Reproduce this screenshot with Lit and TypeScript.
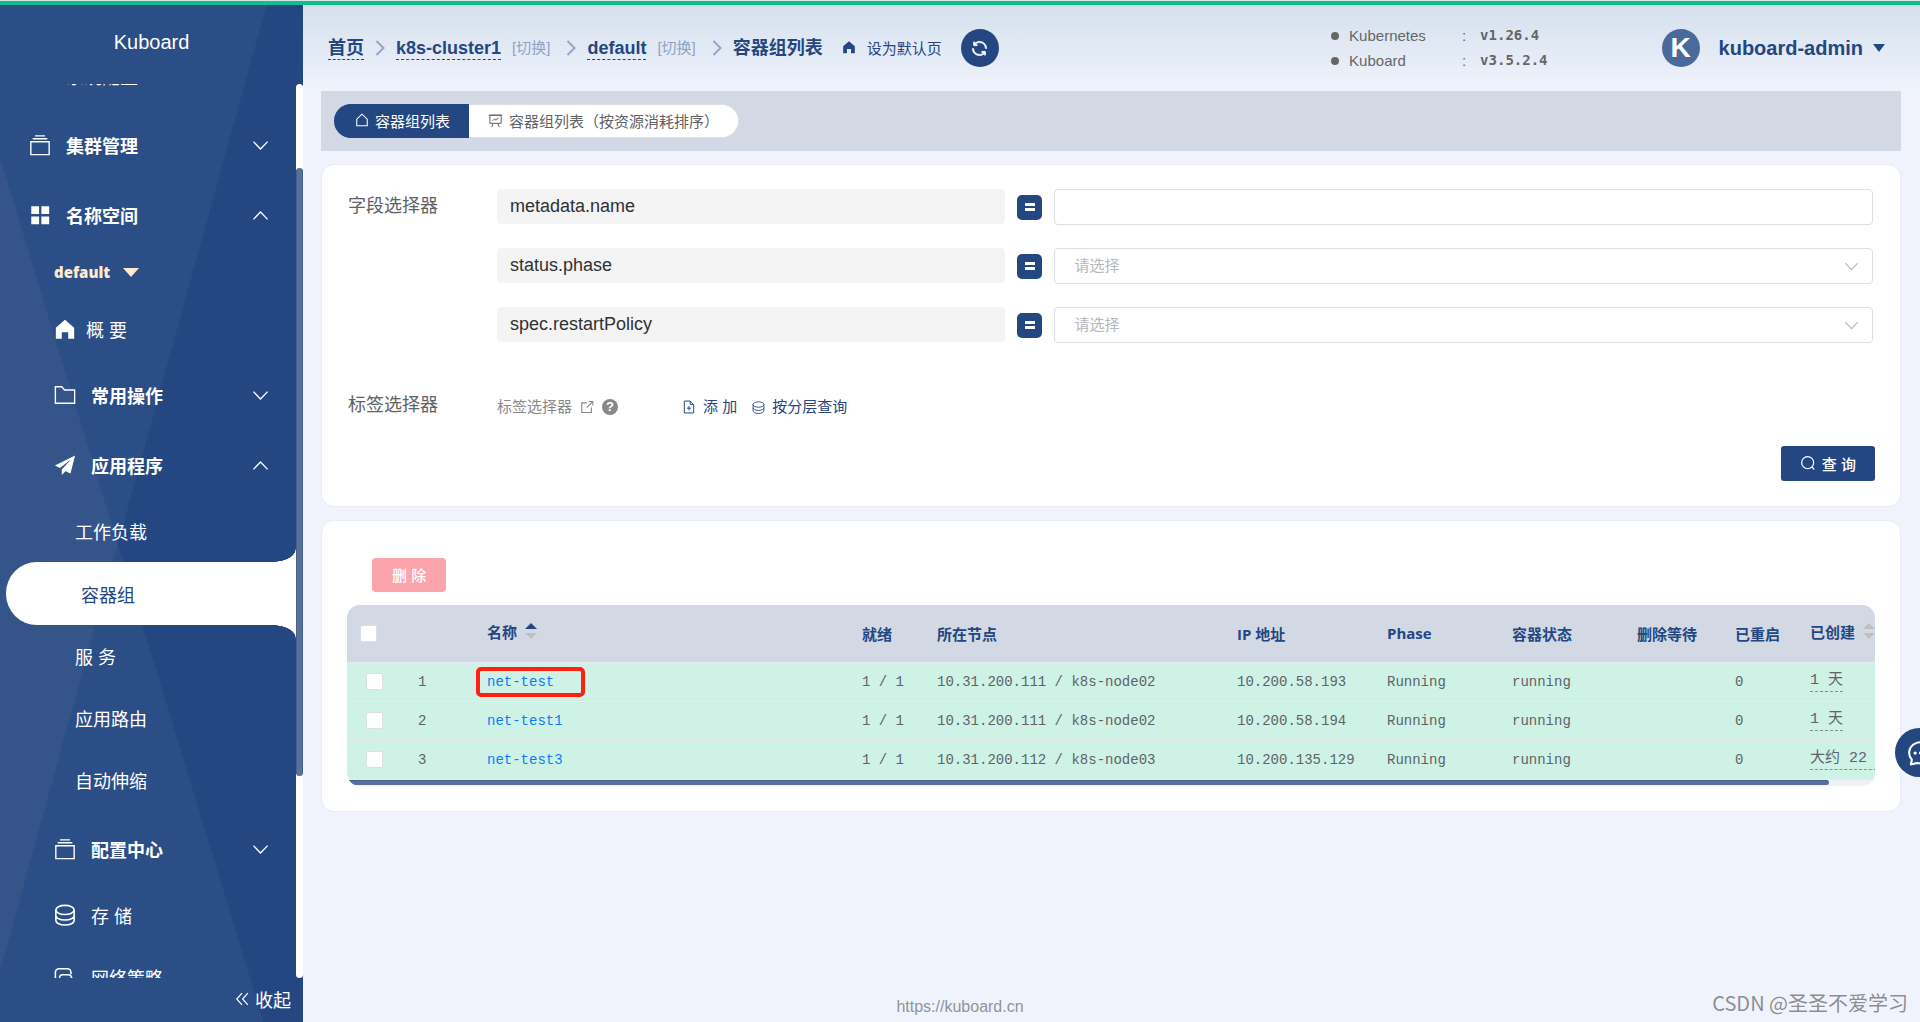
import { LitElement, html, css, svg, nothing } from "lit";
import { customElement, property } from "lit/decorators.js";
import { classMap } from "lit/directives/class-map.js";

const ICONS: Record<string, unknown> = {
  stack: svg`<path d="M2 8.500h20v14H2zM4 5.200h16M6.500 2h11" fill="none" stroke="currentColor" stroke-width="1.500"/>`,
  grid: svg`<path d="M2.500 2.500h8.500v8.500H2.500zM13.500 2.500H22v8.500h-8.500zM2.500 13.500h8.500V22H2.500zM13.500 13.500H22V22h-8.500z" fill="currentColor"/>`,
  home: svg`<path d="M12 2L22 10.500V22.500h-6.500v-7h-7v7H2V10.500z" fill="currentColor"/>`,
  folder: svg`<path d="M1.500 3h7l3 3.500h11V21h-21z" fill="none" stroke="currentColor" stroke-width="1.500"/>`,
  plane: svg`<path d="M23 1.500L1 12.500l5.500 2.700L19 5.500 8.500 17v6l4-4.200 5.500 2.400z" fill="currentColor"/>`,
  coins: svg`<g fill="none" stroke="currentColor" stroke-width="1.700"><ellipse cx="12" cy="6.500" rx="10" ry="5"/><path d="M2 6.500v6c0 2.800 4.500 5 10 5s10-2.200 10-5v-6M2 12.500v5.500c0 2.800 4.500 5 10 5s10-2.200 10-5v-5.500"/></g>`,
  network: svg`<g fill="none" stroke="currentColor" stroke-width="1.700"><path d="M8 17H5.500A4 4 0 0 1 1.500 13V7a4 4 0 0 1 4-4h9a4 4 0 0 1 4 4v2"/><path d="M9.500 22a3.500 3.500 0 0 1-3.500-3.500V13a3.500 3.500 0 0 1 3.500-3.500h6A3.500 3.500 0 0 1 19 13l4.500 2.500"/></g>`,
  down: svg`<path d="M2 6.500L12 17 22 6.500" fill="none" stroke="currentColor" stroke-width="1.800"/>`,
  up: svg`<path d="M2 17.500L12 7 22 17.500" fill="none" stroke="currentColor" stroke-width="1.800"/>`,
  left2: svg`<path d="M12 2L3 12l9 10M22 2l-9 10 9 10" fill="none" stroke="currentColor" stroke-width="2"/>`,
  refresh: svg`<path transform="scale(0.0234375)" fill="currentColor" stroke="currentColor" stroke-width="36" d="M771.776 794.880A384 384 0 0 1 128 512h64a320 320 0 0 0 555.712 216.448H654.720a32 32 0 1 1 0-64h149.056a32 32 0 0 1 32 32v148.928a32 32 0 1 1-64 0v-50.560zM276.288 295.616h92.992a32 32 0 0 1 0 64H220.160a32 32 0 0 1-32-32V178.560a32 32 0 0 1 64 0v50.560A384 384 0 0 1 896.128 512h-64a320 320 0 0 0-555.776-216.384z"/>`,
  house: svg`<path d="M3 22V10.500L12 2l9 8.500V22z" fill="none" stroke="currentColor" stroke-width="1.800"/>`,
  board: svg`<path d="M1 3.500h22M3 3.500h18v13H3zM8 17l-2 5.500M16 17l2 5.500M7.500 12.500l3-3 2.500 2 3.500-4" fill="none" stroke="currentColor" stroke-width="1.600"/>`,
  external: svg`<path d="M12 5H3v16.500h16.500V13M15 2.500h7v7M22 2.500L11.500 13" fill="none" stroke="currentColor" stroke-width="1.900"/>`,
  addFile: svg`<path d="M4 1.800h10l6 6v14.400H4zM14 1.800v6h6M12 10.500v7M8.500 14h7" fill="none" stroke="currentColor" stroke-width="1.700"/>`,
  search: svg`<path d="M11.500 2.500a9 9 0 1 0 0 18 9 9 0 1 0 0-18zM18 18l3.500 4" fill="none" stroke="currentColor" stroke-width="1.800"/>`,
  chat: svg`<path d="M4.500 18.200A10.300 9.700 0 1 1 9.500 21.200L3.500 22.500z" fill="none" stroke="currentColor" stroke-width="1.900" stroke-linejoin="round"/><g fill="currentColor"><circle cx="7.500" cy="12" r="1.500"/><circle cx="12.500" cy="12" r="1.500"/><circle cx="17.500" cy="12" r="1.500"/></g>`,
};

const icon = (name: string, size: number, cls = "") =>
  html`<svg class=${"icon " + cls} width=${size} height=${size} viewBox="0 0 24 24" aria-hidden="true">${ICONS[name]}</svg>`;

const base = css`
  * { box-sizing: border-box; }
  .icon { display: block; flex: none; }
  a { color: inherit; text-decoration: none; }
  button { font: inherit; color: inherit; border: 0; background: none; padding: 0; cursor: pointer; }
`;

@customElement("kb-sidebar")
export class KbSidebar extends LitElement {
  static styles = [base, css`
    :host {
      position: relative;
      display: flex;
      flex-direction: column;
      width: 303px;
      flex: none;
      height: calc(100vh - 5px);
      background: #244782;
      color: #fff;
      font-size: 18px;
      overflow: hidden;
    }
    :host::before, :host::after {
      content: "";
      position: absolute;
      inset: 0;
      background: rgba(255, 255, 255, 0.04);
      pointer-events: none;
    }
    :host::before { clip-path: polygon(0 15%, 87% 100%, 0 100%); }
    :host::after { clip-path: polygon(0 0, 88% 0, 0 95%); }
    .brand { padding: 22px 0 27px; font-size: 20px; line-height: 30px; text-align: center; }
    .body { position: relative; z-index: 1; flex: 1; min-height: 0; display: flex; }
    .menu { flex: 1; overflow: hidden; }
    ul { list-style: none; margin: 0; padding: 0; }
    .tree { margin-top: -39px; }
    .before { padding-bottom: 3px; }
    .apps { padding-bottom: 3px; }
    .item, .title { width: 100%; display: flex; align-items: center; text-align: left; position: relative; }
    .item { height: 62px; padding-left: 75px; }
    .title { height: 70px; padding: 0 27px 0 29px; font-weight: bold; }
    .title .text { flex: 1; }
    .icon.lead { margin-right: 15px; }
    .nested { padding-left: 54px; }
    .root { padding-left: 66px; }
    .close .icon.lead { margin-right: 10px; }
    .ns { display: flex; align-items: center; gap: 13px; height: 48px; padding: 0 0 4px 54px; color: #ffe8cc; }
    .ns .name { font: 800 15px "Open Sans", sans-serif; }
    .caret { border: 8px solid transparent; border-top: 9px solid #ffe8cc; border-bottom: 0; }
    .active { height: 63px; margin-left: 6px; width: calc(100% - 6px); background: #fff; color: #244782; border-radius: 31px 0 0 31px; }
    .active::before, .active::after { content: ""; position: absolute; right: 0; width: 23px; height: 13px; }
    .active::before { top: -13px; background: radial-gradient(ellipse 23px 13px at 0 0, transparent 97%, #fff 100%); }
    .active::after { bottom: -13px; background: radial-gradient(ellipse 23px 13px at 0 100%, transparent 97%, #fff 100%); }
    .track { width: 7px; background: #fff; border-radius: 4px; }
    .thumb { height: 68%; margin-top: 84px; background: #59709b; border-left: 1px solid #47618f; border-right: 1px solid #47618f; border-radius: 4px; }
    .fold { position: relative; z-index: 1; height: 44px; display: flex; justify-content: flex-end; align-items: center; gap: 6px; padding: 0 12px 2px 0; }
  `];

  private title(name: string, lead: string, open: boolean, nested = true) {
    return html`<button class=${classMap({ title: true, nested })} aria-expanded=${open}>
      ${icon(lead, 22, "lead")}<span class="text">${name}</span>${icon(open ? "up" : "down", 17)}
    </button>`;
  }

  render() {
    const apps = ["工作负载", "容器组", "服 务", "应用路由", "自动伸缩"];
    return html`
      <div class="brand">Kuboard</div>
      <div class="body">
        <nav class="menu">
          <ul class="tree">
            <li class="before"><a class="item root" href="#">系统配置</a></li>
            <li>${this.title("集群管理", "stack", false, false)}</li>
            <li>
              ${this.title("名称空间", "grid", true, false)}
              <button class="ns"><span class="name">default</span><span class="caret"></span></button>
              <ul>
                <li><a class="item nested close" href="#">${icon("home", 22, "lead")}概 要</a></li>
                <li>${this.title("常用操作", "folder", false)}</li>
                <li>
                  ${this.title("应用程序", "plane", true)}
                  <ul class="apps">
                    ${apps.map((a) => html`<li><a class=${classMap({ item: true, active: a === "容器组" })} href="#">${a}</a></li>`)}
                  </ul>
                </li>
                <li>${this.title("配置中心", "stack", false)}</li>
                <li><a class="item nested" href="#">${icon("coins", 22, "lead")}存 储</a></li>
                <li><a class="item nested" href="#">${icon("network", 22, "lead")}网络策略</a></li>
              </ul>
            </li>
          </ul>
        </nav>
        <div class="track"><div class="thumb"></div></div>
      </div>
      <button class="fold">${icon("left2", 14)}收起</button>
    `;
  }
}

@customElement("kb-header")
export class KbHeader extends LitElement {
  static styles = [base, css`
    :host {
      display: flex;
      align-items: center;
      height: 86px;
      padding: 0 35px 0 25px;
      background: linear-gradient(#d4e0ed, #f0f3fc);
      color: #244782;
      white-space: nowrap;
    }
    .crumbs { display: flex; align-items: center; gap: 11px; font-size: 18px; line-height: 22px; font-weight: bold; }
    .link { border-bottom: 1px dashed #244782; }
    .switch { margin-right: 5px; font-size: 15px; font-weight: normal; color: #8fa3c3; }
    .sep { color: #92a6c6; }
    .default { display: flex; align-items: center; gap: 11px; margin: 0 19px; padding-bottom: 2px; font-size: 15px; }
    .round { width: 38px; height: 38px; border-radius: 50%; background: #244782; color: #fff; display: grid; place-items: center; }
    .versions { margin: 0 114px 0 auto; display: grid; grid-template-columns: 18px 113px 18px auto; align-items: center; font-size: 15px; line-height: 25px; color: #666; }
    .dot { width: 8px; height: 8px; border-radius: 50%; background: #666; }
    .value { font: bold 14px/25px "DejaVu Sans Mono", monospace; }
    .user { display: flex; align-items: center; font-size: 20px; font-weight: bold; }
    .avatar { width: 38px; height: 38px; margin-right: 19px; border-radius: 50%; background: #4a6a9c; color: #fff; font-size: 28px; line-height: 38px; text-align: center; }
    .caret { margin-left: 10px; border: 6px solid transparent; border-top: 8px solid #244782; border-bottom: 0; }
  `];

  private sep() {
    return html`<svg class="icon sep" width="10" height="16" viewBox="0 0 10 16" aria-hidden="true"><path d="M1.500 1l7 7-7 7" fill="none" stroke="currentColor" stroke-width="2"/></svg>`;
  }

  render() {
    return html`
      <nav class="crumbs">
        <a class="link" href="#">首页</a>${this.sep()}
        <a class="link" href="#">k8s-cluster1</a><a class="switch" href="#">[切换]</a>${this.sep()}
        <a class="link" href="#">default</a><a class="switch" href="#">[切换]</a>${this.sep()}
        <span>容器组列表</span>
      </nav>
      <button class="default">${icon("home", 14)}设为默认页</button>
      <button class="round" aria-label="刷新">${icon("refresh", 19)}</button>
      <div class="versions">
        <span class="dot"></span><span>Kubernetes</span><span>:</span><span class="value">v1.26.4</span>
        <span class="dot"></span><span>Kuboard</span><span>:</span><span class="value">v3.5.2.4</span>
      </div>
      <button class="user"><span class="avatar">K</span>kuboard-admin<span class="caret"></span></button>
    `;
  }
}

@customElement("kb-filter")
export class KbFilter extends LitElement {
  static styles = [base, css`
    :host { display: block; padding: 24px 25px 25px 26px; background: #fff; border: 1px solid #e9ecf4; border-radius: 13px; font-size: 15px; color: #606266; }
    .row { display: grid; grid-template-columns: 149px 1fr; }
    .label { font-size: 18px; line-height: 34px; }
    .fields { display: grid; gap: 23px; padding-right: 2px; }
    .field { display: grid; grid-template-columns: 508fr 25px 818fr; gap: 12px; align-items: center; }
    .key { align-self: start; height: 35px; padding-left: 13px; border-radius: 4px; background: #f4f4f4; color: #303133; font-size: 18px; line-height: 34px; }
    .eq { height: 25px; border-radius: 5px; background: #244782; display: grid; place-content: center; gap: 2px; }
    .eq::before, .eq::after { content: ""; width: 10px; height: 3px; background: #fff; }
    .box { display: grid; align-items: center; }
    .box > * { grid-area: 1 / 1; }
    .input { width: 100%; height: 36px; padding: 0 19px 2px; border: 1px solid #dcdfe6; border-radius: 4px; background: #fff; appearance: none; font: inherit; color: #b4b7be; outline: 0; }
    .arrow { justify-self: end; margin-right: 14px; color: #b4b7be; pointer-events: none; }
    .labels { margin-top: 48px; }
    .labels .label { line-height: 28px; }
    .tools { display: flex; align-items: center; color: #244782; line-height: 28px; padding-top: 2px; }
    .tools > * { display: flex; align-items: center; gap: 7px; }
    .hint { color: #888; gap: 8px; width: 185px; }
    .help { width: 16px; height: 16px; border-radius: 50%; background: #888; color: #fff; font: bold 13px/16px "Liberation Sans", sans-serif; text-align: center; }
    .layer { margin-left: 15px; }
    .actions { display: flex; justify-content: flex-end; margin-top: 25px; }
    .query { display: flex; align-items: center; gap: 6px; height: 35px; padding: 0 19px 1px; border-radius: 3px; background: #244782; color: #fff; font-size: 15px; font-weight: 500; }
  `];

  private field(key: string, select: boolean) {
    return html`<div class="field">
      <label class="key" for=${key}>${key}</label>
      <span class="eq"></span>
      <div class="box">
        ${select
          ? html`<select class="input" id=${key}><option>请选择</option></select>${icon("down", 15, "arrow")}`
          : html`<input class="input" id=${key} type="text" />`}
      </div>
    </div>`;
  }

  render() {
    return html`
      <div class="row">
        <span class="label">字段选择器</span>
        <div class="fields">
          ${this.field("metadata.name", false)}
          ${this.field("status.phase", true)}
          ${this.field("spec.restartPolicy", true)}
        </div>
      </div>
      <div class="row labels">
        <span class="label">标签选择器</span>
        <div class="tools">
          <a class="hint" href="#">标签选择器 ${icon("external", 14)}<span class="help">?</span></a>
          <button>${icon("addFile", 14)}添 加</button>
          <button class="layer">${icon("coins", 13)}按分层查询</button>
        </div>
      </div>
      <div class="actions"><button class="query">${icon("search", 16)}查 询</button></div>
    `;
  }
}

interface Pod { name: string; node: string; ip: string; age: string; marked?: boolean; }

@customElement("kb-pods")
export class KbPods extends LitElement {
  @property({ attribute: false }) pods: Pod[] = [];

  static styles = [base, css`
    :host { display: block; padding: 37px 25px 25px; background: #fff; border: 1px solid #e9ecf4; border-radius: 13px; }
    .delete { display: block; height: 34px; margin: 0 0 13px 25px; padding: 0 20px 2px; border-radius: 4px; background: #fba4ab; color: #fff; font-size: 15px; font-weight: 500; }
    .wrap { overflow: hidden; border-radius: 13px; }
    table { width: 100%; min-width: 1575px; table-layout: fixed; border-collapse: separate; border-spacing: 0; font: 14px "Liberation Mono", "Noto Sans CJK SC", monospace; color: #606266; }
    th, td { padding: 0 0 0 13px; text-align: left; border-bottom: 1px solid #e6ebf2; white-space: nowrap; }
    th { height: 58px; padding-bottom: 1px; background: #d3d9e4; color: #244782; font: bold 15px "Open Sans", "Noto Sans CJK SC", sans-serif; }
    td { height: 39px; padding-bottom: 1px; background: #cff2e7; }
    td.pick { padding-left: 19px; }
    .c-pick { width: 58px; } .c-no { width: 69px; } .c-ready, .c-restart { width: 75px; }
    .c-node { width: 300px; } .c-ip { width: 150px; } .c-state, .c-age { width: 125px; } .c-wait { width: 98px; }
    .check { display: block; width: 17px; height: 17px; margin: 0; appearance: none; background: #fff; border: 1px solid #dcdfe6; border-radius: 2px; }
    .sort { display: inline-flex; align-items: center; gap: 8px; padding-bottom: 4px; }
    .arrows { display: grid; gap: 4px; }
    .arrows::before, .arrows::after { content: ""; border: 6px solid transparent; }
    .arrows::before { border-top: 0; border-bottom: 6px solid #c0c0c0; }
    .arrows::after { border-bottom: 0; border-top: 6px solid #c0c0c0; }
    .arrows.asc::before { border-bottom-color: #244782; }
    .name { position: relative; color: #0b7dfb; }
    .mark { position: absolute; left: 2px; top: 4px; width: 109px; height: 30px; border: 4px solid #ff2010; border-radius: 5px; pointer-events: none; }
    .age { display: inline-block; font-size: 15px; line-height: 20px; border-bottom: 1px dashed #8a8f94; }
    .track { height: 6px; background: #eef1f6; }
    .thumb { width: 97%; height: 5px; background: #58709a; border-top: 1px solid #47608c; border-radius: 0 4px 4px 0; }
  `];

  render() {
    return html`
      <button class="delete">删 除</button>
      <div class="wrap">
        <table>
          <colgroup>
            <col class="c-pick" /><col class="c-no" /><col /><col class="c-ready" /><col class="c-node" /><col class="c-ip" />
            <col class="c-state" /><col class="c-state" /><col class="c-wait" /><col class="c-restart" /><col class="c-age" />
          </colgroup>
          <thead><tr>
            <th><input class="check" type="checkbox" aria-label="全选" /></th><th></th>
            <th><span class="sort">名称<span class="arrows asc"></span></span></th>
            <th>就绪</th><th>所在节点</th><th>IP 地址</th><th>Phase</th><th>容器状态</th><th>删除等待</th><th>已重启</th>
            <th><span class="sort">已创建<span class="arrows"></span></span></th>
          </tr></thead>
          <tbody>
            ${this.pods.map((p, i) => html`<tr>
              <td class="pick"><input class="check" type="checkbox" aria-label=${p.name} /></td>
              <td>${i + 1}</td>
              <td class="name"><a href="#">${p.name}</a>${p.marked ? html`<span class="mark"></span>` : nothing}</td>
              <td>1 / 1</td><td>${p.node}</td><td>${p.ip}</td><td>Running</td><td>running</td><td></td><td>0</td>
              <td><span class="age">${p.age}</span></td>
            </tr>`)}
          </tbody>
        </table>
        <div class="track"><div class="thumb"></div></div>
      </div>
    `;
  }
}

@customElement("app-root")
export class AppRoot extends LitElement {
  static styles = [base, css`
    :host { display: block; position: relative; overflow: hidden; min-height: 100vh; background: #f0f3fc; font-family: "Liberation Sans", "Noto Sans CJK SC", sans-serif; }
    .progress { height: 5px; background: #10bf90; border-top: 1px solid #dde2e6; }
    .shell { display: flex; min-height: calc(100vh - 5px); }
    .main { flex: 1; min-width: 0; display: flex; flex-direction: column; }
    .content { flex: 1; display: flex; flex-direction: column; gap: 13px; padding: 0 19px 0 18px; }
    .tabs { display: flex; align-items: center; height: 60px; padding: 0 13px; background: #d3d9e4; }
    .tab { display: flex; align-items: center; gap: 6px; height: 34px; padding: 0 19px 2px; font-size: 15px; color: #606266; background: #fff; border: 1px solid #dcdfe6; border-left: 0; border-radius: 0 17px 17px 0; }
    .on { background: #244782; color: #fff; border-color: #244782; border-radius: 17px 0 0 17px; border-right: 0; padding-left: 21px; }
    .footer { padding: 0 303px 5px 0; font-size: 16px; line-height: 20px; text-align: center; color: #909399; }
    .chat { position: absolute; right: -24px; top: 728px; width: 49px; height: 49px; border-radius: 50%; background: #244782; color: #fff; display: grid; place-items: center; }
    .credit { position: absolute; right: 12px; bottom: 4px; font: 20px/30px "Noto Sans CJK SC", sans-serif; color: #8c8d92; text-shadow: 0 0 1px #fff; }
  `];

  private pods: Pod[] = [
    { name: "net-test", node: "10.31.200.111 / k8s-node02", ip: "10.200.58.193", age: "1 天", marked: true },
    { name: "net-test1", node: "10.31.200.111 / k8s-node02", ip: "10.200.58.194", age: "1 天" },
    { name: "net-test3", node: "10.31.200.112 / k8s-node03", ip: "10.200.135.129", age: "大约 22 小时" },
  ];

  render() {
    return html`
      <div class="progress"></div>
      <div class="shell">
        <kb-sidebar></kb-sidebar>
        <main class="main">
          <kb-header></kb-header>
          <div class="content">
            <div class="tabs">
              <button class="tab on">${icon("house", 14)}容器组列表</button>
              <button class="tab">${icon("board", 15)}容器组列表（按资源消耗排序）</button>
            </div>
            <kb-filter></kb-filter>
            <kb-pods .pods=${this.pods}></kb-pods>
          </div>
          <footer class="footer"><a href="#">https://kuboard.cn</a></footer>
        </main>
      </div>
      <button class="chat" aria-label="反馈">${icon("chat", 26)}</button>
      <span class="credit">CSDN @圣圣不爱学习</span>
    `;
  }
}
